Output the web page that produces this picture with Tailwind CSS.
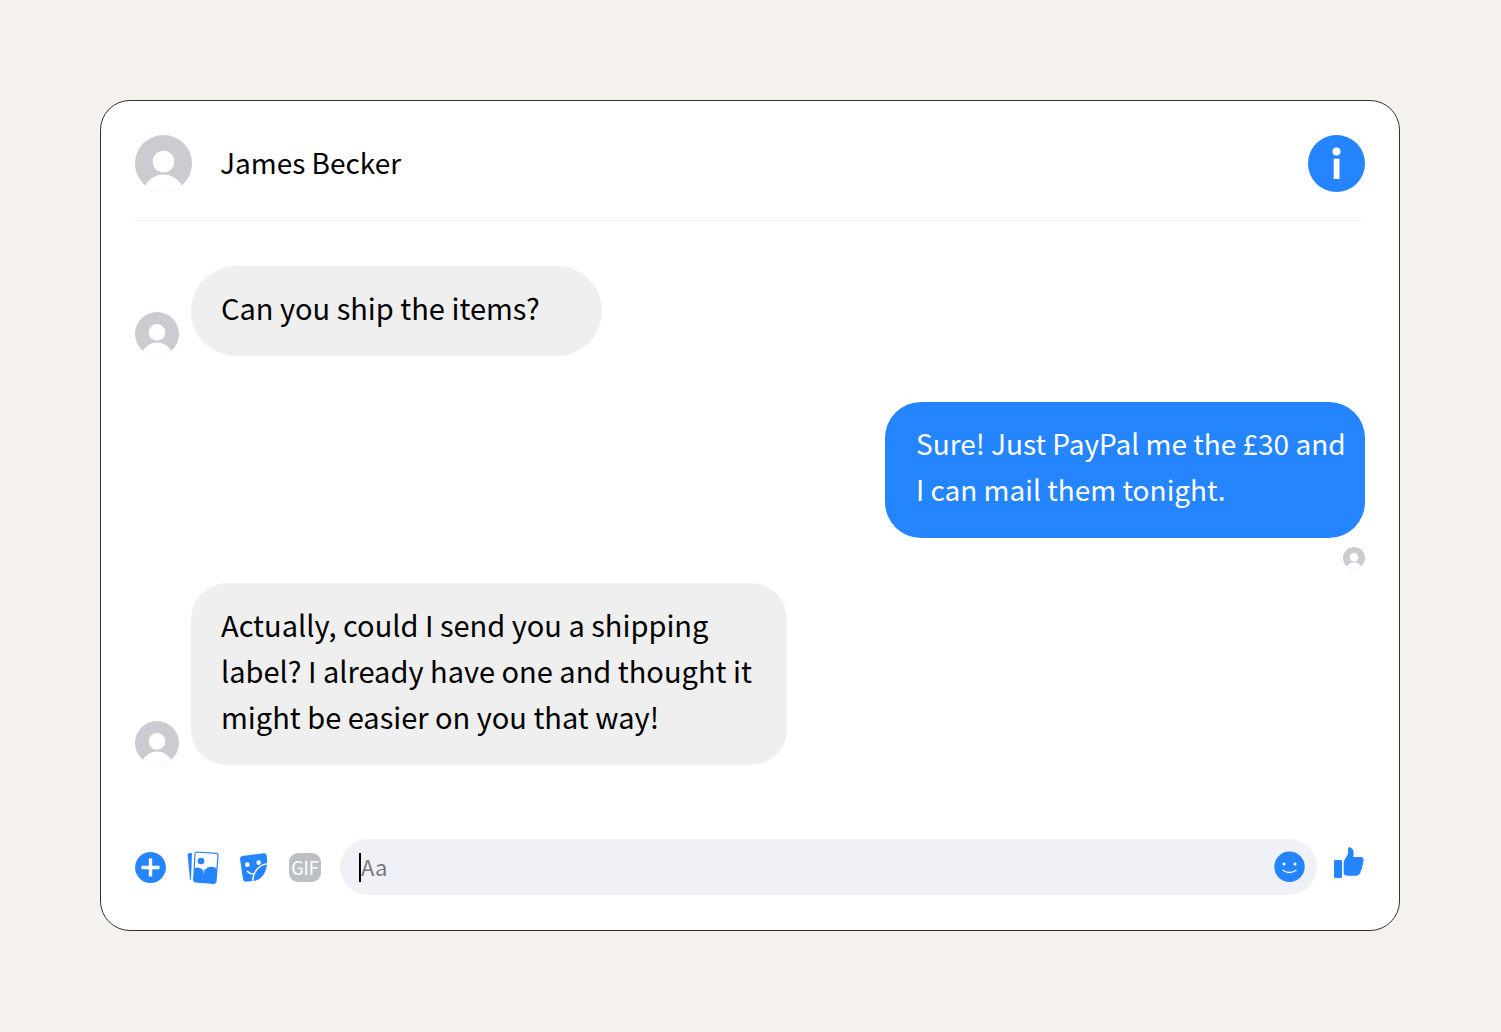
<!DOCTYPE html>
<html lang="en">
<head>
    <meta charset="UTF-8">
    <meta name="viewport" content="width=device-width, initial-scale=1.0">
    <title>James Becker</title>
    <script src="https://cdn.jsdelivr.net/npm/@tailwindcss/browser@4"></script>
</head>
<body class="bg-[#f5f1ec] py-[100px] pl-[100px] pr-[101px] font-['Noto_Sans_CJK_SC','Open_Sans',sans-serif] text-[29px] leading-[46px] text-black">

    <svg class="hidden">
        <symbol id="avatar" viewBox="0 0 57 57">
            <circle cx="28.5" cy="28.5" r="28.5" fill="#cbccd1"/>
            <circle cx="28.5" cy="26.5" r="10.8" fill="#fff"/>
            <path d="M10.3 50.4C14 44 21 39.6 28.5 39.6S43 44 46.7 50.4A28.3 28.3 0 0 1 10.3 50.4z" fill="#fff"/>
        </symbol>
    </svg>

    <div class="bg-white border border-[#333] rounded-[30px] px-[34px] pt-[34px] pb-[35px]">
        <header class="flex items-center pb-7 border-b border-[#f1f1f1]">
            <svg class="size-[57px] mr-7"><use href="#avatar"/></svg>
            <h1 class="pb-1 text-[28px]">James Becker</h1>
            <button class="ml-auto" aria-label="Conversation information">
                <svg class="size-[57px]" viewBox="0 0 57 57">
                    <circle cx="28.5" cy="28.5" r="28.5" fill="#2584ff"/>
                    <circle cx="28.5" cy="16.5" r="4" fill="#fff"/>
                    <path d="M25.7 23.7h5.8v20.3h-5.8z" fill="#fff"/>
                </svg>
            </button>
        </header>

        <main class="pt-[45px]">
            <div class="flex items-end gap-3">
                <svg class="size-11 shrink-0"><use href="#avatar"/></svg>
                <p class="w-[411px] rounded-[45px] bg-[#efefef] pt-[18px] pb-[26px] px-[30px]">Can you ship the items?</p>
            </div>

            <div class="mt-[46px] flex flex-col items-end gap-[9px]">
                <p class="w-[480px] rounded-[36px] bg-[#2584ff] text-[28px] text-white pt-[18px] pb-[26px] pl-[31px] pr-4">Sure! Just PayPal me the £30 and<br>I can mail them tonight.</p>
                <svg class="size-[22px]"><use href="#avatar"/></svg>
            </div>

            <div class="mt-[14px] flex items-end gap-3">
                <svg class="size-11 shrink-0"><use href="#avatar"/></svg>
                <p class="w-[596px] rounded-[36px] bg-[#efefef] pt-[18px] pb-[26px] px-[30px]">Actually, could I send you a shipping label? I already have one and thought it might be easier on you that way!</p>
            </div>
        </main>

        <form class="mt-[74px] flex items-center">
            <button type="button" aria-label="More actions">
                <svg class="w-[31px] h-[31px]" viewBox="0 0 31 31">
                    <circle cx="15.5" cy="15.5" r="15.4" fill="#2584ff"/>
                    <path d="M15.5 6.5v18M6.5 15.5h18" stroke="#fff" stroke-width="3.4"/>
                </svg>
            </button>
            <button type="button" class="ml-[21px]" aria-label="Add photo">
                <svg class="w-8 h-[35px]" viewBox="0 0 96 105">
                    <path d="M2 15q-1-4 3-5l10-1-3 80-3 0z" fill="#2584ff"/>
                    <path d="M28 6l60 4q6 1 5 7l-6 77q-1 6-7 6l-54-4q-6-1-6-6l4-78q0-6 4-6z" fill="#fff" stroke="#2584ff" stroke-width="3.5"/>
                    <circle cx="42" cy="33" r="10" fill="#2584ff"/>
                    <path d="M22 55q6-3 13-2 11 1 15 13 0 3-1 6 4-5 3-9-1-3-4-5 3 0 6 2 6-10 18-10 12 0 18 7l-4 38q-1 6-7 5l-53-4q-6-1-6-6z" fill="#2584ff"/>
                </svg>
            </button>
            <button type="button" class="ml-5" aria-label="Choose a sticker">
                <svg class="w-[30px] h-[31px]" viewBox="0 0 90 93">
                    <path d="M9 12l65-8q8-1 9 7c2 14 2 27-1 37-5 20-18 35-33 38l-29 3q-7 0-8-7L3 21q0-8 6-9z" fill="#2584ff"/>
                    <circle cx="25" cy="38" r="7" fill="#fff"/>
                    <circle cx="59" cy="32" r="7" fill="#fff"/>
                    <path d="M86 35C60 38 40 60 41 92M24 57q9 11 24 8" fill="none" stroke="#fff" stroke-width="4"/>
                </svg>
            </button>
            <button type="button" class="ml-5 w-8 h-[29px] rounded-[9px] bg-[#bcc0c5] text-white text-lg leading-[28px] flex justify-center">GIF</button>
            <div class="relative ml-[19px] flex-1">
                <input type="text" aria-label="Message" placeholder="Aa" class="block w-full h-14 rounded-full bg-[#f0f1f6] pl-[21px] pr-16 pb-0.5 text-[22px] outline-none placeholder:text-[#7b7b7d]">
                <span class="absolute left-[19px] top-3.5 w-0.5 h-[29px] bg-black"></span>
                <button type="button" class="absolute right-3 top-3" aria-label="Choose an emoji">
                    <svg class="w-[31px] h-[31px]" viewBox="0 0 31 31">
                        <circle cx="15.5" cy="15.8" r="15.2" fill="#2584ff"/>
                        <circle cx="10" cy="13" r="1.5" fill="#fff"/>
                        <circle cx="21" cy="13" r="1.5" fill="#fff"/>
                        <path d="M9 19.2q6.5 4.6 13 0" fill="none" stroke="#fff" stroke-width="1.3" stroke-linecap="round"/>
                    </svg>
                </button>
            </div>
            <button type="button" class="ml-4 mb-2" aria-label="Send a like">
                <svg class="w-8 h-8" viewBox="0 0 96 96">
                    <rect x="3" y="39" width="24" height="54" rx="4" fill="#2584ff"/>
                    <path d="M32 46q0-4 3-8l8-13q2-4 2-9V4q1-4 5-3 11 3 12 16 0 7-2 13h24q8 1 8 8 0 4-2 6 3 9-3 14 2 8-4 13 1 8-6 12-3 3-9 3H44q-9 0-12-5z" fill="#2584ff"/>
                </svg>
            </button>
        </form>
    </div>

</body>
</html>
